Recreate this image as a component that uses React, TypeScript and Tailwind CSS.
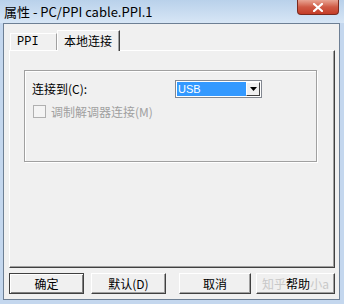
import React from 'react';

const cjk = { fontFamily: '"Noto Sans CJK SC", "Liberation Sans", sans-serif' };

function Btn({ children, primary }: { children: React.ReactNode; primary?: boolean }) {
  return (
    <div
      className={
        'flex h-[21px] items-center justify-center bg-[#f0f0f0] text-[12px] text-black border ' +
        (primary
          ? 'border-[#404040] shadow-[inset_1px_1px_0_#ffffff,inset_-1px_-1px_0_#808080]'
          : 'border-t-[#ffffff] border-l-[#ffffff] border-r-[#404040] border-b-[#404040] shadow-[inset_-1px_-1px_0_#a0a0a0]')
      }
    >
      {children}
    </div>
  );
}

export default function App() {
  return (
    <div className="flex h-[304px] w-[344px] flex-col overflow-hidden bg-[#c4d7ee]" style={cjk}>
      {/* Title bar */}
      <div className="relative flex h-[23px] shrink-0 items-center bg-gradient-to-b from-[#b9d1ea] to-[#d7e6f6] pl-[4px]">
        <span className="text-[13px] leading-none text-black">属性 - PC/PPI cable.PPI.1</span>
        <div className="absolute right-[5px] top-0 flex h-[15px] w-[42px] items-center justify-center rounded-b-[4px] border border-t-0 border-[#7a2a1e] bg-gradient-to-b from-[#e8a493] via-[#cf5a45] to-[#c43c27]">
          <svg width="10" height="9" viewBox="0 0 10 9">
            <path d="M1 1 L9 8 M9 1 L1 8" stroke="#ffffff" strokeWidth="2.2" strokeLinecap="square" />
          </svg>
        </div>
      </div>

      {/* Body */}
      <div className="mb-[4px] ml-[3px] mr-[4px] flex flex-1 flex-col border border-[#6d7f94] bg-[#f0f0f0] pl-[5px] pr-[4px]">
        {/* Tabs */}
        <div className="flex h-[26px] items-end pl-[1px] pt-[6px]">
          <div className="flex h-[17px] w-[47px] items-center border-l border-t border-r border-l-white border-t-white border-r-[#a0a0a0] pl-[6px] text-[12px] leading-none text-black" style={{ fontFamily: '"Liberation Mono", monospace' }}>
            PPI
          </div>
          <div className="relative z-10 -mb-[1px] flex h-[21px] w-[63px] items-center border-l border-t border-r border-l-white border-t-white border-r-[#404040] bg-[#f0f0f0] pl-[6px] text-[12px] leading-none text-black shadow-[inset_-1px_0_0_#a0a0a0]">
            本地连接
          </div>
        </div>

        {/* Tab panel */}
        <div className="flex h-[218px] flex-col border border-l-white border-t-white border-r-[#404040] border-b-[#404040] pt-[19px] shadow-[inset_-1px_-1px_0_#a0a0a0]">
          <div className="ml-[14px] mr-[17px] h-[92px] border border-[#a0a0a0] shadow-[1px_1px_0_#ffffff,inset_1px_1px_0_#ffffff]">
            <div className="flex items-center pl-[7px] pt-[9px]">
              <span className="w-[143px] text-[12px] leading-none text-black">
                连接到(C):
              </span>
              <div className="flex h-[18px] w-[87px] items-center border border-[#828790] bg-white p-[1px]">
                <div className="flex h-full flex-1 items-center bg-[#3399ff] pl-[1px] text-[11px] leading-none text-white" style={{ fontFamily: '"Liberation Sans Narrow", "Liberation Sans", sans-serif' }}>
                  USB
                </div>
                <div className="flex h-full w-[14px] items-center justify-center border border-l-white border-t-white border-r-[#404040] border-b-[#404040] bg-[#f0f0f0]">
                  <svg width="7" height="4" viewBox="0 0 7 4">
                    <path d="M0 0 H7 L3.5 4 Z" fill="#000" />
                  </svg>
                </div>
              </div>
            </div>
            <div className="flex items-center pl-[8px] pt-[7px]">
              <div className="h-[13px] w-[13px] border border-[#b0b0b0] bg-[#f4f4f4]" />
              <span className="ml-[5px] text-[12px] leading-none text-[#a0a0a0]">调制解调器连接(M)</span>
            </div>
          </div>
        </div>

        {/* Buttons */}
        <div className="flex pt-[5px]">
          <div className="w-[75px]"><Btn primary>确定</Btn></div>
          <div className="ml-[7px] w-[75px]"><Btn>默认(D)</Btn></div>
          <div className="ml-[13px] w-[72px]"><Btn>取消</Btn></div>
          <div className="ml-[5px] w-[79px]">
            <Btn>
              <span className="whitespace-nowrap text-[12px] leading-none">
                <span className="text-[#c8c8c8]">知乎</span>
                <span className="text-black">帮助</span>
                <span className="text-[#c8c8c8]">小a</span>
              </span>
            </Btn>
          </div>
        </div>
      </div>
    </div>
  );
}
